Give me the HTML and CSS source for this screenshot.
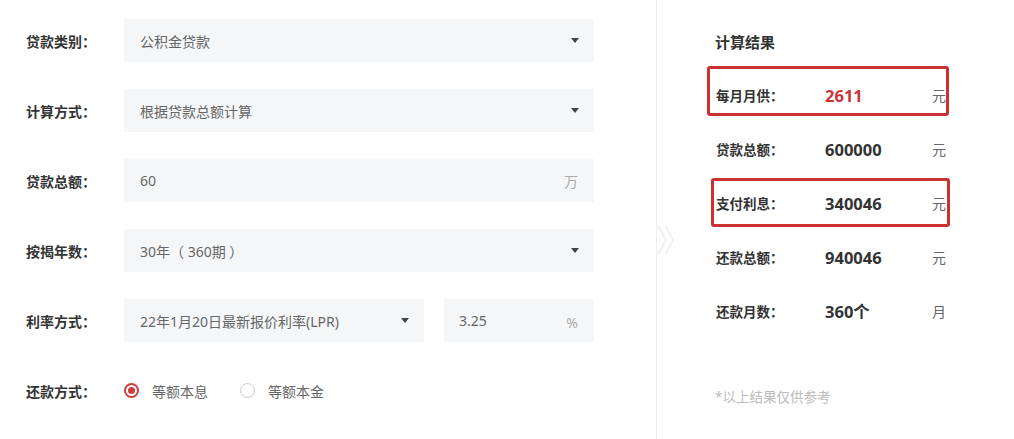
FILE: index.html
```html
<!DOCTYPE html>
<html lang="zh-CN">
<head>
<meta charset="utf-8">
<title>房贷计算器</title>
<link rel="stylesheet" href="styles.css">
</head>
<body>
<div class="page">
  <div class="form">
    <div class="row">
      <div class="label">贷款类别：</div>
      <div class="field select"><span class="text">公积金贷款</span><span class="caret"></span></div>
    </div>
    <div class="row">
      <div class="label">计算方式：</div>
      <div class="field select"><span class="text">根据贷款总额计算</span><span class="caret"></span></div>
    </div>
    <div class="row">
      <div class="label">贷款总额：</div>
      <div class="field"><span class="text">60</span><span class="suffix">万</span></div>
    </div>
    <div class="row">
      <div class="label">按揭年数：</div>
      <div class="field select"><span class="text">30年（ 360期 ）</span><span class="caret"></span></div>
    </div>
    <div class="row">
      <div class="label">利率方式：</div>
      <div class="split">
        <div class="field select narrow"><span class="text">22年1月20日最新报价利率(LPR)</span><span class="caret"></span></div>
        <div class="field rate"><span class="text">3.25</span><span class="suffix pct">%</span></div>
      </div>
    </div>
    <div class="row">
      <div class="label">还款方式：</div>
      <div class="radios">
        <label class="radio checked"><span class="dot"></span><span>等额本息</span></label>
        <label class="radio"><span class="dot"></span><span>等额本金</span></label>
      </div>
    </div>
  </div>
  <svg class="chevron" width="22" height="36" viewBox="0 0 22 36">
    <polyline points="2,3 10,18 2,33" fill="none" stroke="#efefef" stroke-width="1.6"/>
    <polyline points="9,3 17,18 9,33" fill="none" stroke="#efefef" stroke-width="1.6"/>
  </svg>
  <div class="result">
    <div class="title">计算结果</div>
    <div class="res-row">
      <span class="mark mark-a"></span>
      <span class="r-label">每月月供：</span><span class="r-value red">2611</span><span class="r-unit">元</span>
    </div>
    <div class="res-row">
      <span class="r-label">贷款总额：</span><span class="r-value">600000</span><span class="r-unit">元</span>
    </div>
    <div class="res-row">
      <span class="mark mark-b"></span>
      <span class="r-label">支付利息：</span><span class="r-value">340046</span><span class="r-unit">元</span>
    </div>
    <div class="res-row">
      <span class="r-label">还款总额：</span><span class="r-value">940046</span><span class="r-unit">元</span>
    </div>
    <div class="res-row">
      <span class="r-label">还款月数：</span><span class="r-value">360个</span><span class="r-unit">月</span>
    </div>
    <div class="note">*以上结果仅供参考</div>
  </div>
</div>
</body>
</html>
```

FILE: styles.css
```css
html, body {
  margin: 0;
  padding: 0;
  background: #fff;
}
body {
  font-family: "Noto Sans", "Noto Sans CJK SC", sans-serif;
  color: #333;
}
.page {
  position: relative;
  display: flex;
  height: 439px;
  overflow: hidden;
}
.form {
  width: 657px;
  box-sizing: border-box;
  padding: 19px 0 0 26px;
  border-right: 1px solid #efefef;
  flex: none;
}
.row {
  display: flex;
  align-items: center;
  height: 43px;
  margin-bottom: 27px;
}
.label {
  width: 98px;
  flex: none;
  font-size: 14px;
  font-weight: bold;
  color: #333;
}
.field {
  width: 470px;
  height: 43px;
  box-sizing: border-box;
  background: #f5f6f8;
  display: flex;
  align-items: center;
  justify-content: space-between;
  padding: 0 14px 0 16px;
  font-size: 14px;
  color: #666;
}
.split {
  display: flex;
  gap: 20px;
}
.field.narrow {
  width: 300px;
}
.field.rate {
  width: 150px;
  padding-left: 15px;
}
.caret {
  width: 0;
  height: 0;
  border-left: 4px solid transparent;
  border-right: 4px solid transparent;
  border-top: 5px solid #444;
  margin-right: 1px;
}
.suffix {
  color: #aaa;
  font-size: 14px;
  margin-right: 2px;
}
.suffix.pct {
  padding-top: 4px;
}
.radios {
  display: flex;
  align-items: center;
  gap: 32px;
}
.radio {
  display: flex;
  align-items: center;
  gap: 13px;
  font-size: 14px;
  color: #666;
}
.dot {
  width: 15px;
  height: 15px;
  box-sizing: border-box;
  border-radius: 50%;
  border: 1.5px solid #ccc;
  background: #fff;
  display: flex;
  align-items: center;
  justify-content: center;
}
.radio.checked .dot {
  border: 2px solid #c94040;
}
.radio.checked .dot::after {
  content: "";
  width: 7px;
  height: 7px;
  border-radius: 50%;
  background: #c94040;
}
.chevron {
  position: absolute;
  left: 656px;
  top: 222px;
}
.result {
  padding: 30px 0 0 58px;
  flex: 1;
}
.title {
  font-size: 15px;
  font-weight: bold;
  line-height: 24px;
  margin-bottom: 14px;
  color: #333;
}
.res-row {
  position: relative;
  display: flex;
  align-items: center;
  height: 54px;
}
.r-label {
  width: 109px;
  font-size: 13.5px;
  font-weight: bold;
  color: #333;
  padding-left: 1px;
}
.r-value {
  width: 107px;
  font-size: 16.5px;
  font-weight: bold;
  color: #333;
}
.r-value.red {
  color: #c8343a;
}
.r-unit {
  font-size: 14px;
  color: #666;
}
.mark {
  position: absolute;
  border: 3px solid #cc3030;
  border-radius: 3px;
  box-sizing: border-box;
}
.mark-a {
  left: -8px;
  top: -2px;
  width: 242px;
  height: 50px;
}
.mark-b {
  left: -4px;
  top: 2px;
  width: 239px;
  height: 49px;
}
.note {
  margin-top: 49px;
  line-height: 20px;
  font-size: 13.5px;
  color: #bbb;
}
```
